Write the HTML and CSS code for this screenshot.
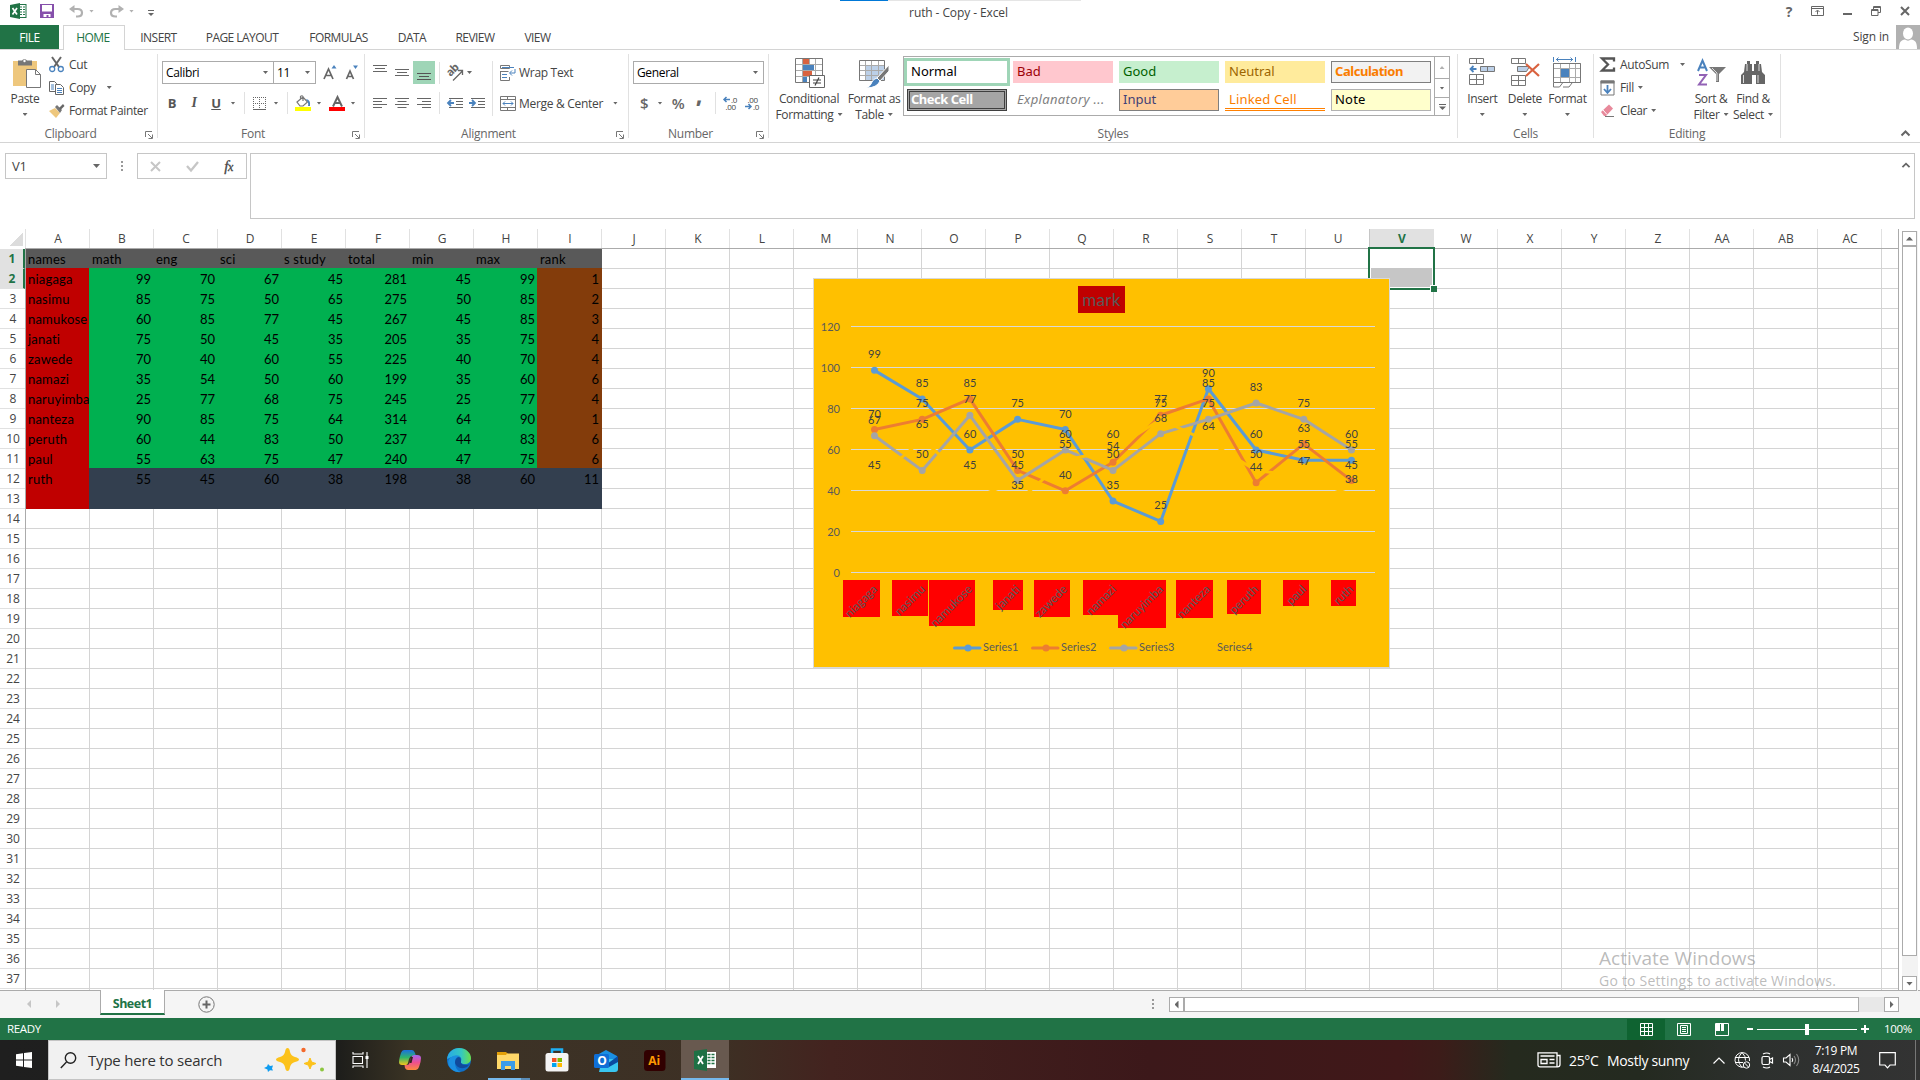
FILE: index.html
```html
<!DOCTYPE html>
<html lang="en">
<head>
<meta charset="utf-8">
<title>ruth - Copy - Excel</title>
<link rel="stylesheet" href="styles.css">
</head>
<body>
<div class="app">
  <header class="titlebar">
    <div class="busy"></div>
    <div class="quick">
      <svg class="q-xl" width="17" height="16" viewBox="0 0 17 16"><rect x="9" y="1.500" width="7" height="13" fill="#fff" stroke="#217346"/><path d="M10 4h5M10 6.500h5M10 9h5M10 11.500h5" stroke="#217346"/><path d="M12.500 2v12" stroke="#fff"/><path d="M0 2L10 0v16L0 14z" fill="#217346"/><path d="M2.500 5l4.500 6.500M7 5l-4.500 6.500" stroke="#fff" stroke-width="1.700"/></svg>
      <svg class="q-save" width="14" height="14" viewBox="0 0 14 14"><path d="M0 0h14v14H0z" fill="#8650ab"/><path d="M2 1h10v6.500H2zM3.500 10h7v3h-2v-2h-2v2h-3z" fill="#fff"/></svg>
      <svg class="q-undo" width="15" height="13" viewBox="0 0 15 13"><path d="M2 4h6.500c6 0 6 7.500 0 7.500H7" fill="none" stroke="#b1b1b1" stroke-width="2.200"/><path d="M0 4l5.500-4v8z" fill="#b1b1b1"/></svg>
      <i class="arr light"></i>
      <svg class="q-redo" width="15" height="13" viewBox="0 0 15 13"><path d="M13 4H6.500c-6 0-6 7.500 0 7.500H8" fill="none" stroke="#b1b1b1" stroke-width="2.200"/><path d="M15 4L9.500 0v8z" fill="#b1b1b1"/></svg>
      <i class="arr light"></i>
      <svg class="q-more" width="6" height="6" viewBox="0 0 6 6"><path d="M0 .5h6" stroke="#666"/><path d="M0 3h6L3 6z" fill="#666"/></svg>
    </div>
    <div class="title">ruth - Copy - Excel</div>
    <div class="winbtns">
      <b>?</b>
      <svg width="13" height="10" viewBox="0 0 13 10" fill="none" stroke="#666"><path d="M.5.5h12v9H.5zM.5 2.500h12M6.500 8.500V4.500M4.500 6l2-2 2 2"/></svg>
      <svg width="9" height="10" viewBox="0 0 9 10"><path d="M0 7h9v2H0z" fill="#666"/></svg>
      <svg width="10" height="10" viewBox="0 0 10 10" fill="none" stroke="#666"><path d="M2.500 3V.5h7v6H7M2.500 1.500h7M.5 3.500h6.500v6H.5zM.5 4.500H7"/></svg>
      <svg width="10" height="10" viewBox="0 0 10 10"><path d="M1 1l8 8M9 1L1 9" stroke="#666" stroke-width="2"/></svg>
    </div>
  </header>

  <nav class="tabs">
    <a class="file">FILE</a><a class="home">HOME</a><a class="t-ins">INSERT</a><a class="t-page">PAGE LAYOUT</a><a class="t-form">FORMULAS</a><a class="t-data">DATA</a><a class="t-rev">REVIEW</a><a class="t-view">VIEW</a>
    <span class="signin">Sign in</span>
    <svg width="24" height="24" viewBox="0 0 24 24"><path d="M0 0h24v24H0z" fill="#b1b1b1"/><ellipse cx="12" cy="8.500" rx="5" ry="6" fill="#fff"/><path d="M3 24c0-7 2-9 6-9.500 2 1.500 4 1.500 6 0 4 .5 6 2.500 6 9.500z" fill="#fff"/></svg>
  </nav>

  <section class="ribbon">
    <div class="group">
      <div class="body clip">
        <div class="big paste">
          <svg width="30" height="30" viewBox="0 0 30 30"><path d="M1 3h24v25H1z" fill="#eec77d"/><path d="M6 2.500h4a3 3 0 0 1 5 0h5v5H6z" fill="#777"/><circle cx="12.500" cy="3" r="1.200" fill="#fff"/><path d="M14.500 11.500h9l5 5v13h-14z" fill="#fff" stroke="#777"/><path d="M23.500 11.500v5h5" fill="none" stroke="#777"/></svg>
          <span>Paste</span><i class="arr"></i>
        </div>
        <div class="stack">
          <div class="item"><svg width="15" height="16" viewBox="0 0 15 16"><path d="M3 0l7 10M12 0L5 10" stroke="#666" stroke-width="2"/><circle cx="3.200" cy="12" r="2.500" fill="none" stroke="#4a82bd" stroke-width="1.300"/><circle cx="11.800" cy="12" r="2.500" fill="none" stroke="#4a82bd" stroke-width="1.300"/></svg><span>Cut</span></div>
          <div class="item"><svg width="15" height="14" viewBox="0 0 15 14" fill="#fff" stroke="#666"><path d="M.5.5h5l2 2v8h-7z"/><path d="M2 4h3M2 6h3M2 8h3" stroke="#4a82bd"/><path d="M6.500 3.500h5l3 3v7h-8z"/><path d="M8 7.500h5M8 9.500h5M8 11.500h5" stroke="#4a82bd"/></svg><span>Copy</span><i class="arr gap10"></i></div>
          <div class="item"><svg width="15" height="14" viewBox="0 0 15 14"><path d="M0 7l6-3 5 5-4 5z" fill="#eec77d"/><path d="M6 3l2-2 5 5-2 3z" fill="#777"/><path d="M10 4l4-4 1.500 2-4 4z" fill="#666"/></svg><span>Format Painter</span></div>
        </div>
      </div>
      <div class="caption"><span>Clipboard</span><svg class="launch" viewBox="0 0 8 8"><path d="M.5 6V.5H7M3 3l4 4M7.500 3.500v4h-4" fill="none" stroke="#777"/></svg></div>
    </div>

    <div class="group">
      <div class="body font-body">
        <div class="font-top">
          <div class="combo c-font"><span>Calibri</span><i class="arr"></i></div><div class="combo c-size"><span>11</span><i class="arr"></i></div>
          <svg class="grow" width="14" height="15" viewBox="0 0 14 15"><path d="M1 14L5.500 4 10 14M3 10.500h5" fill="none" stroke="#666" stroke-width="1.700"/><path d="M8.500 3.500L11 0l2.500 3.500z" fill="#4a82bd"/></svg>
          <svg class="shrink" width="14" height="15" viewBox="0 0 14 15"><path d="M1.500 14L5 6l3.500 8M3 11.500h4" fill="none" stroke="#666" stroke-width="1.700"/><path d="M8 .5h5L10.500 4z" fill="#4a82bd"/></svg>
        </div>
        <div class="font-row">
          <b>B</b><b class="it">I</b><b class="un">U</b><i class="arr"></i><i class="vsep"></i>
          <svg width="13" height="13" viewBox="0 0 13 13" fill="none" stroke="#666"><path d="M.5 0v12M12.500 0v12M6.500 0v12M0 .5h13M0 6.500h13" stroke-dasharray="1 1"/><path d="M0 12.500h13"/></svg><i class="arr"></i><i class="vsep"></i>
          <svg width="16" height="16" viewBox="0 0 16 16"><path d="M0 12h16v4H0z" fill="#ff0"/><path d="M2 7l6-5 4.500 5L8 11H5zM5.500 5V1.500q1.500-1.500 2.500 0V6" fill="none" stroke="#777" stroke-width="1.200"/><path d="M11 4q5 1 4 7h-2q1-3-2-7" fill="#4a82bd"/></svg><i class="arr"></i>
          <svg width="16" height="16" viewBox="0 0 16 16"><path d="M0 12h16v4H0z" fill="red"/><path d="M4 11.500L8.500 2l4.500 9.500M6 8h5" fill="none" stroke="#666" stroke-width="2"/></svg><i class="arr"></i>
        </div>
      </div>
      <div class="caption"><span>Font</span><svg class="launch" viewBox="0 0 8 8"><path d="M.5 6V.5H7M3 3l4 4M7.500 3.500v4h-4" fill="none" stroke="#777"/></svg></div>
    </div>

    <div class="group">
      <div class="body align-body">
        <div class="align-row">
          <svg width="14" height="22" viewBox="0 0 14 22"><path d="M0 3.500h14M2 6.500h10M0 9.500h14" stroke="#666"/></svg>
          <svg width="14" height="22" viewBox="0 0 14 22"><path d="M0 7.500h14M2 10.500h10M0 13.500h14" stroke="#666"/></svg>
          <svg class="on" width="22" height="23" viewBox="0 0 22 23"><path d="M4 12.500h14M6 15.500h10M4 18.500h14" stroke="#555"/></svg>
          <i class="vsep"></i>
          <svg width="16" height="16" viewBox="0 0 16 16"><text x="0" y="0" transform="translate(3.500 12) rotate(-45)" class="ab">ab</text><path d="M6 15.500l9-9M11 5.500h4.500V10" fill="none" stroke="#666" stroke-width="1.300"/></svg>
          <i class="arr near"></i><i class="vsep tall"></i>
          <svg width="16" height="16" viewBox="0 0 16 16" fill="none" stroke="#777"><path d="M.5.5h9v3h-9zM.5 6v9.500h9V12M.5 6.500h8"/><path d="M2 2.500h12M2 9.500h5M2 12.500h5M15 4v4h-5M12 5.500L9.500 8l2.500 2.500" stroke="#4a82bd"/></svg><span class="txt">Wrap Text</span>
        </div>
        <div class="align-row second">
          <svg width="14" height="11" viewBox="0 0 14 11"><path d="M0 .5h14M0 3.500h9M0 6.500h14M0 9.500h9" stroke="#666"/></svg>
          <svg width="14" height="11" viewBox="0 0 14 11"><path d="M0 .5h14M2.500 3.500h9M0 6.500h14M2.500 9.500h9" stroke="#666"/></svg>
          <svg width="14" height="11" viewBox="0 0 14 11"><path d="M0 .5h14M5 3.500h9M0 6.500h14M5 9.500h9" stroke="#666"/></svg>
          <i class="vsep"></i>
          <svg width="16" height="11" viewBox="0 0 16 11"><path d="M2 .5h14M9 3.500h7M9 6.500h7M2 9.500h14" stroke="#666"/><path d="M1 5h6M4 2L1 5l3 3" fill="none" stroke="#4a82bd" stroke-width="1.800"/></svg>
          <svg width="16" height="11" viewBox="0 0 16 11"><path d="M2 .5h14M9 3.500h7M9 6.500h7M2 9.500h14" stroke="#666"/><path d="M0 5h6M3 2l3 3-3 3" fill="none" stroke="#4a82bd" stroke-width="1.800"/></svg>
          <i></i>
          <svg width="16" height="15" viewBox="0 0 16 15" fill="none" stroke="#777"><path d="M.5.5h15v14H.5zM.5 3.500h15M.5 11.500h15M7.500 0v3M7.500 12v3"/><path d="M3 7.500h10M5 5.500l-2 2 2 2M11 5.500l2 2-2 2" stroke="#4a82bd"/></svg><span class="txt">Merge &amp; Center <i class="arr merge"></i></span>
        </div>
      </div>
      <div class="caption"><span>Alignment</span><svg class="launch" viewBox="0 0 8 8"><path d="M.5 6V.5H7M3 3l4 4M7.500 3.500v4h-4" fill="none" stroke="#777"/></svg></div>
    </div>

    <div class="group">
      <div class="body num-body">
        <div class="combo c-num"><span>General</span><i class="arr"></i></div>
        <div class="num-row">
          <b class="cur">$</b><i class="arr"></i><b class="pct">%</b><b class="comma">,</b><i class="vsep"></i>
          <svg width="15" height="15" viewBox="0 0 15 15"><path d="M1 3.500h6M3.500 1L1 3.500 3.500 6" fill="none" stroke="#4a82bd" stroke-width="1.500"/><text x="8" y="6.500" class="dec">.0</text><text x="2.500" y="14" class="dec">.00</text></svg>
          <svg width="15" height="15" viewBox="0 0 15 15"><path d="M0 10.500h6M3.500 8L6 10.500 3.500 13" fill="none" stroke="#4a82bd" stroke-width="1.500"/><text x="2.500" y="6.500" class="dec">.00</text><text x="8" y="14" class="dec">.0</text></svg>
        </div>
      </div>
      <div class="caption"><span>Number</span><svg class="launch" viewBox="0 0 8 8"><path d="M.5 6V.5H7M3 3l4 4M7.500 3.500v4h-4" fill="none" stroke="#777"/></svg></div>
    </div>

    <div class="group">
      <div class="body style-body">
        <div class="big cond">
          <svg width="30" height="30" viewBox="0 0 30 30"><path d="M.5.5h27v24H.5z" fill="#fff"/><path d="M8 1h6v5H8zM8 13h9v5H8z" fill="#d9623f"/><path d="M8 7h11v5H8zM8 19h4v5H8z" fill="#4a82bd"/><path d="M.5 6.500h27M.5 12.500h27M.5 18.500h27M7.500.5v24M20.500.5v24M14.500.5v6" stroke="#aaa"/><path d="M.5.5h27v24H.5z" fill="none" stroke="#777"/><path d="M14.500 17.500h15v12h-15z" fill="#fff" stroke="#666"/><path d="M18 22h8M18 25h8M24 19.500l-4 8" stroke="#444" stroke-width="1.200"/></svg>
          <span>Conditional</span><span>Formatting<i class="arr in"></i></span>
        </div>
        <div class="big tbl">
          <svg width="30" height="30" viewBox="0 0 30 30"><path d="M.5 2.500h25v20H.5z" fill="#fff"/><path d="M7 7h18v15H7z" fill="#bcd0e8"/><path d="M.5 7.500h25M.5 12.500h25M.5 17.500h25M6.500 2.500v20M12.500 2.500v20M19.500 2.500v20" stroke="#aaa"/><path d="M.5 2.500h25v20H.5z" fill="none" stroke="#777"/><path d="M30 7v6l-9 10-3-3z" fill="#777" stroke="#fff"/><path d="M18 20l3 3q-3 7-14 7 5-2 6-6 1-3 5-4" fill="#4a82bd" stroke="#fff"/></svg>
          <span>Format as</span><span>Table<i class="arr in"></i></span>
        </div>
        <div class="gallery">
          <div class="swatches">
            <div class="sw normal">Normal</div><div class="sw bad">Bad</div><div class="sw good">Good</div><div class="sw neutral">Neutral</div><div class="sw calc">Calculation</div>
            <div class="sw check">Check Cell</div><div class="sw expl">Explanatory ...</div><div class="sw input">Input</div><div class="sw linked">Linked Cell</div><div class="sw note">Note</div>
          </div>
          <div class="gscroll"><div><i class="arr up light"></i></div><div><i class="arr"></i></div><div><svg width="7" height="6" viewBox="0 0 7 6"><path d="M0 .5h7" stroke="#666"/><path d="M0 2.500h7L3.500 6z" fill="#666"/></svg></div></div>
        </div>
      </div>
      <div class="caption"><span>Styles</span></div>
    </div>

    <div class="group">
      <div class="body cells-body">
        <div class="big"><svg width="28" height="30" viewBox="0 0 28 30" fill="none" stroke="#777"><path d="M1.500.5h14v5h-14zM8.500.5v5M1.500 16.500h14v10h-14zM8.500 16.500v10M1.500 21.500h14"/><path d="M12.500 8.500h14v5h-14z" fill="#bcd0e8"/><path d="M19.500 8.500v5"/><path d="M2.500 11h6M5.500 8l-3 3 3 3" stroke="#4a82bd" stroke-width="1.800"/></svg><span>Insert</span><i class="arr"></i></div>
        <div class="big"><svg width="28" height="30" viewBox="0 0 28 30" fill="none" stroke="#777"><path d="M.5.5h14v5H.5zM7.500.5v5M.5 17.500h14v10H.5zM7.500 17.500v10M.5 22.500h14"/><path d="M6.500 8.500h12l-3 5h-9z" fill="#bcd0e8"/><path d="M15 6l13 12M28 6L15 18" stroke="#d9623f" stroke-width="2.200"/></svg><span>Delete</span><i class="arr"></i></div>
        <div class="big"><svg width="28" height="32" viewBox="0 0 28 32" fill="none" stroke="#777"><path d="M.5 7.500h27v19H.5zM7.500 7v20M16.500 7v20M22.500 7v20M.5 12.500h27M.5 21.500h27" stroke="#aaa"/><path d="M.5 7.500h27v19H.5zM.5 27v4h6l3-4M10 31h6l3-4"/><path d="M8 13h8v8H8z" fill="#4a82bd" stroke="none"/><path d="M.5 1v5M22.500 1v5M3 3.500h17M5.500 1.500l-2 2 2 2M17.500 1.500l2 2-2 2" stroke="#4a82bd"/></svg><span>Format</span><i class="arr"></i></div>
      </div>
      <div class="caption"><span>Cells</span></div>
    </div>

    <div class="group">
      <div class="body edit-body">
        <div class="stack">
          <div class="item"><svg width="15" height="16" viewBox="0 0 15 16"><path d="M14 4.500V1.500H2l6 6-6 6h12v-3" fill="none" stroke="#555" stroke-width="2.300"/></svg><span>AutoSum</span><i class="arr gap10"></i></div>
          <div class="item"><svg width="15" height="16" viewBox="0 0 15 16"><path d="M1 1h13v14H1z" fill="#fff" stroke="#777"/><path d="M.5.5h14v3H.5z" fill="#777"/><path d="M7.500 5v7M4 9l3.500 4L11 9" fill="none" stroke="#4a82bd" stroke-width="1.800"/></svg><span>Fill</span><i class="arr in"></i></div>
          <div class="item"><svg width="15" height="14" viewBox="0 0 15 14"><path d="M1 8l8-7.500 4 4L6 12H4z" fill="#e8899b"/><path d="M3 6l4 4.500" stroke="#fff"/><path d="M5 12.500h9" stroke="#777"/></svg><span>Clear</span><i class="arr in"></i></div>
        </div>
        <div class="big sort"><svg width="29" height="28" viewBox="0 0 29 28"><path d="M1 12L5.500 1.500 10 12M3 8.500h5" fill="none" stroke="#4a82bd" stroke-width="2"/><path d="M2 16h7L2 25.500h8" fill="none" stroke="#9262b5" stroke-width="2"/><path d="M12 8h17l-7 7v8h-3v-8z" fill="#777"/><path d="M15 9l5 5v8" stroke="#ddd" fill="none"/></svg><span>Sort &amp;</span><span>Filter<i class="arr in"></i></span></div>
        <div class="big find"><svg width="26" height="26" viewBox="0 0 26 26" fill="#666"><path d="M7 1h3v3h2v7h2V4h2V1h3v3h2l1 8 3 3v9h-9v-9h-4v9H1v-9l3-3 1-8h2z"/><path d="M3.500 15v8M18 15v8M7 4v7M19 4v7" stroke="#ddd"/></svg><span>Find &amp;</span><span>Select<i class="arr in"></i></span></div>
      </div>
      <div class="caption"><span>Editing</span></div>
    </div>
    <div class="collapse"><svg width="9" height="6" viewBox="0 0 9 6"><path d="M.5 5.500l4-4 4 4" fill="none" stroke="#666" stroke-width="2"/></svg></div>
  </section>

  <section class="fbar">
    <div class="namebox"><span>V1</span><i class="arr wide"></i></div>
    <div class="dots"><i></i><i></i><i></i></div>
    <div class="fbtns">
      <svg width="11" height="11" viewBox="0 0 11 11"><path d="M1 1l9 9M10 1l-9 9" stroke="#c6c6c6" stroke-width="2"/></svg>
      <svg width="13" height="11" viewBox="0 0 13 11"><path d="M1 5l4 4.500L12 1" fill="none" stroke="#c6c6c6" stroke-width="2.300"/></svg>
      <span class="fx">f<small>x</small></span>
    </div>
    <div class="finput"><svg width="8" height="6" viewBox="0 0 9 6"><path d="M.5 5.500l4-4 4 4" fill="none" stroke="#666" stroke-width="2"/></svg></div>
  </section>

  <main class="sheet">
    <div class="sheet-main">
      <div class="colheads" id="colheads"><div class="corner"></div></div>
      <div class="rows">
        <div class="rowheads" id="rowheads"></div>
        <div class="grid">
          <div class="data" id="data"></div>
          <div class="selection"></div>
          <svg class="chart" id="chart" width="577" height="390" viewBox="813 278 577 390"></svg>
        </div>
      </div>
    </div>
    <div class="vscroll"><div class="sbtn"><i class="arr up"></i></div><div class="vthumb"></div><div class="sbtn"><i class="arr"></i></div></div>
    <div class="watermark"><p>Activate Windows</p><p class="small">Go to Settings to activate Windows.</p></div>
  </main>

  <section class="sheettabs">
    <i class="tri left"></i><i class="tri right"></i>
    <div class="stab">Sheet1</div>
    <svg class="plus" width="17" height="17" viewBox="0 0 17 17"><circle cx="8.500" cy="8.500" r="7.700" fill="none" stroke="#777"/><path d="M8.500 4.500v8M4.500 8.500h8" stroke="#666" stroke-width="2"/></svg>
    <div class="dots hd"><i></i><i></i><i></i></div>
    <div class="hscroll"><div class="hbtn"><i class="tri left dark"></i></div><div class="hthumb"></div><div class="htrack"></div><div class="hbtn"><i class="tri right dark"></i></div></div>
  </section>

  <section class="status">
    <span class="ready">READY</span>
    <div class="view act"><svg width="13" height="13" viewBox="0 0 13 13"><path d="M.5.5h12v12H.5zM.5 4.500h12M.5 8.500h12M4.500.5v12M8.500.5v12" fill="none" stroke="#fff"/></svg></div>
    <div class="view"><svg width="14" height="13" viewBox="0 0 14 13"><path d="M.5.5h13v12H.5zM3.500 2.500h7v8h-7zM5 4.500h4M5 6.500h4M5 8.500h4" fill="none" stroke="#fff"/></svg></div>
    <div class="view"><svg width="14" height="13" viewBox="0 0 14 13"><path d="M.5.5h13v12H.5z" fill="none" stroke="#fff"/><path d="M1 1h4v7H1zM6 1h3v7H6z" fill="#fff"/></svg></div>
    <div class="zoom"><i class="minus"></i><div class="track"><i></i></div><i class="pl"></i></div>
    <span class="pctv">100%</span>
  </section>

  <footer class="taskbar">
    <div class="start"><svg width="16" height="16" viewBox="0 0 16 16" fill="#fff"><path d="M0 2.300L7 1.200V7.500H0zM8 1l8-1v7.500H8zM0 8.500h7v6.300L0 13.800zM8 8.500h8V16l-8-1z"/></svg></div>
    <div class="search">
      <svg width="17" height="17" viewBox="0 0 17 17" fill="none" stroke="#222" stroke-width="1.400"><circle cx="10.500" cy="6" r="5.200"/><path d="M6.500 10L.8 16"/></svg>
      <span>Type here to search</span>
      <svg class="spark" width="60" height="26" viewBox="0 0 60 26"><path d="M23.500 1q2 0 2.500 4 1 4 5 5 4 1 4 2.500T31 15q-4 1-5 5-.5 4-2.500 4T21 20q-1-4-5-5-4-1-4-2.500T16 10q4-1 5-5 .500-4 2.500-4" fill="#fcc21b"/><path d="M46 11l1.600 4 4.400 1.500-4.400 1.700L46 22l-1.600-3.800L40 16.500l4.400-1.500z" fill="#fcc21b" stroke="#fcc21b"/><path d="M4 17l2 2 3-.5-1 3 1 2-3-.3L4 25l-.6-2.500L0 21l3-1.500z" fill="#0f9cf0"/><circle cx="39.500" cy="3" r="2.200" fill="#f4692c"/><circle cx="58" cy="22.500" r="2" fill="#8cc63f"/></svg>
    </div>
    <div class="tk"><svg width="17" height="16" viewBox="0 0 17 16" fill="none" stroke="#fff" stroke-width="1.100"><path d="M1 4.500h9.500v7H1zM1 0v2h10V0M1 16v-2h10v2M15 0v16"/><path d="M13.500 4h3v3h-3z" fill="#fff" stroke="none"/></svg></div>
    <div class="tk"><svg width="22" height="22" viewBox="0 0 22 22"><defs><linearGradient id="c1" x2="0" y2="1"><stop offset="0" stop-color="#1a6fe0"/><stop offset=".5" stop-color="#30b56a"/><stop offset="1" stop-color="#f4c51c"/></linearGradient><linearGradient id="c2" x2="0" y2="1"><stop offset="0" stop-color="#a464f0"/><stop offset=".5" stop-color="#ee4f8f"/><stop offset="1" stop-color="#fb8a3c"/></linearGradient></defs><path d="M5 1h8q2 0 3 3l1 3h-4q-2 0-3 3l-1 4q-.6 2-2 2H3q-3 0-3-3 0-3 2-9 1-3 3-3" fill="url(#c1)"/><path d="M17 21H9q-2 0-3-2l-.5-3H8q2 0 2.500-2l1.500-5q1-3 3-3h3q4 0 4 3 0 4-2 9-1 3-3 3" fill="url(#c2)"/><path d="M10.500 14l1.500-6h2l-1.500 6z" fill="#33251d"/></svg></div>
    <div class="tk"><svg width="24" height="24" viewBox="0 0 24 24"><defs><linearGradient id="e1"><stop offset="0" stop-color="#27a8e8"/><stop offset=".6" stop-color="#35c8c0"/><stop offset="1" stop-color="#6be04a"/></linearGradient></defs><circle cx="12" cy="12" r="12" fill="#0f6fc8"/><path d="M0 11C1 4 6 0 12 0c7 0 12 5 12 10 0 4-3 6-6 6-4 0-5-2-4-3 1-2 0-5-4-5-5 0-9 3-10 3" fill="url(#e1)"/><path d="M8 14q0-5 5-6-6-2-10 2-3 3-1 8 4 7 12 6-6-2-6-10" fill="#1b8fe0"/><path d="M14 13q-1 4 5 4 2 0 4-1-2 3-6 4-7 1-9-5 0-5 4-6 2 1 2 4" fill="#114a9b"/></svg></div>
    <div class="tk under split"><svg width="22" height="19" viewBox="0 0 22 19"><path d="M0 1h9l2 2h10v5H0z" fill="#e3a008"/><path d="M0 4h9l1-1.500h12V18H0z" fill="#ffd869"/><path d="M4 10h14v9h-4v-4H8v4H4z" fill="#3c9ce8"/></svg></div>
    <div class="tk"><svg width="24" height="24" viewBox="0 0 24 24"><path d="M7 8V1.500h10V8" fill="none" stroke="#1fb1f5" stroke-width="2.500"/><rect x=".5" y="5" width="23" height="18.500" rx="2.500" fill="#f4f4f4"/><path d="M7 10h4.500v4H7z" fill="#f25022"/><path d="M12.500 10H17v4h-4.500z" fill="#7fba00"/><path d="M7 15h4.500v4H7z" fill="#00a4ef"/><path d="M12.500 15H17v4h-4.500z" fill="#ffb900"/></svg></div>
    <div class="tk"><svg width="24" height="23" viewBox="0 0 24 23"><path d="M3 6l9-5 11 6v6H3z" fill="#1a8fe3"/><path d="M8 10h16v10q0 3-3 3H5z" fill="#39c5f0"/><path d="M13 15l11-8v6l-9 5z" fill="#0a4aa0"/><rect y="5" width="15" height="14" rx="1.500" fill="#0f6fd6"/><text x="3.200" y="16" class="logo">O</text></svg></div>
    <div class="tk"><svg width="22" height="21" viewBox="0 0 22 21"><rect width="21.500" height="21" rx="3.500" fill="#310000"/><text x="4.300" y="15" class="logo ai">Ai</text></svg></div>
    <div class="tk active under"><svg width="23" height="22" viewBox="0 0 23 22"><path d="M12 3h10v16H12z" fill="#fff"/><path d="M13.500 5.500h7M13.500 8.500h7M13.500 11.500h7M13.500 14.500h7" stroke="#217346" stroke-width="1.500"/><path d="M17 4v14" stroke="#fff"/><path d="M0 2l13-2v22L0 20z" fill="#1e7145"/><path d="M4 7l5 8M9 7l-5 8" stroke="#fff" stroke-width="1.800"/></svg></div>
    <div class="tray">
      <svg class="news" width="24" height="16" viewBox="0 0 24 16" fill="none" stroke="#fff" stroke-width="1.300"><path d="M1 .8h19v14H3q-2 0-2-2zM20 3.500h3v9q0 2.300-2.500 2.300M3.500 4h14M12.500 7.500h5M12.500 11h5M4 7.500h6v4H4z"/></svg>
      <span class="wx">25°C</span><span class="wx2">Mostly sunny</span>
      <svg class="more" width="12" height="7" viewBox="0 0 12 7"><path d="M.5 6.500L6 1l5.500 5.500" fill="none" stroke="#fff" stroke-width="1.200"/></svg>
      <svg class="globe" width="17" height="17" viewBox="0 0 17 17" fill="none" stroke="#fff"><path d="M10 15A7.300 7.300 0 1 1 15.500 9M8 .5q-7 7 0 15M8 .5q4 4 3.500 8M1 5.500h14M1 10.500h8"/><circle cx="12.500" cy="13" r="3.200"/><path d="M10.500 11l4 4"/></svg>
      <svg class="cam" width="12" height="17" viewBox="0 0 12 17" fill="none" stroke="#fff" stroke-width="1.200"><rect x="1" y="4.500" width="7.500" height="8" rx="1.500"/><path d="M8.500 7.500l3-1.500v5l-3-1.500M2 2q4-2 7 0M2 15q4 2 7 0"/></svg>
      <svg class="vol" width="17" height="14" viewBox="0 0 17 14" fill="none" stroke="#fff" stroke-width="1.100"><path d="M.5 5h2.500l4-3.500v11L3 9H.5zM9 5q1.500 2 0 4"/><path d="M11 3q3 4 0 8M13.500 1q4.500 6 0 12" stroke="#888"/></svg>
      <div class="clock"><span>7:19 PM</span><span>8/4/2025</span></div>
      <svg class="notif" width="17" height="17" viewBox="0 0 17 17"><path d="M.7.700h15.600v12.300H11l-2.500 2.800L6 13H.7z" fill="none" stroke="#fff" stroke-width="1.200"/></svg>
      <i class="peek"></i>
    </div>
  </footer>
</div>
<script src="script.js"></script>
</body>
</html>
```
FILE: styles.css
```css
* { box-sizing: border-box; }
body { margin: 0; background: #fff; font: 12px "Open Sans", "Noto Sans", sans-serif; color: #444; letter-spacing: -0.35px; }
p { margin: 0; }
svg { display: block; flex: none; overflow: visible; }
.app { width: 1920px; height: 1080px; display: flex; flex-direction: column; overflow: hidden; }
.arr { display: inline-block; flex: none; width: 5px; height: 3px; background: #666; clip-path: polygon(0 0, 100% 0, 50% 100%); }
.arr.light { background: #b1b1b1; }
.arr.wide { width: 7px; height: 4px; }
.arr.up { clip-path: polygon(50% 0, 100% 100%, 0 100%); }
.arr.in { margin-left: 4px; vertical-align: 3px; }
.arr.gap10 { margin-left: 11px; }
.arr.merge { margin-left: 7px; vertical-align: 3px; }

/* title bar */
.titlebar { height: 25px; display: grid; grid-template-columns: 840px 237px 1fr; position: relative; }
.busy { position: absolute; left: 840px; top: 0; width: 241px; height: 1px; background: linear-gradient(90deg, #0078d7 48px, #e5e5e5 48px); }
.quick { display: flex; align-items: center; height: 22px; padding-left: 10px; }
.q-save { margin-left: 13px; }
.q-undo { margin: 0 5px 0 15px; }
.q-redo { margin: 0 5px 0 15px; }
.q-more { margin: 4px 0 0 14px; }
.title { text-align: center; line-height: 26px; letter-spacing: -0.1px; }
.winbtns { display: flex; align-items: center; justify-content: flex-end; height: 22px; padding-right: 10px; gap: 19px; color: #666; }
.winbtns b { font-size: 14px; margin-right: 0; }

/* ribbon tabs */
.tabs { height: 25px; display: flex; line-height: 25px; position: relative; border-bottom: 1px solid #d4d4d4; }
.tabs a { text-align: center; letter-spacing: -0.55px; }
.tabs .file { width: 59px; background: #217346; color: #fff; }
.tabs .home { width: 62px; margin-left: 4px; height: 25px; border: 1px solid #d4d4d4; border-bottom: 0; background: #fff; color: #217346; line-height: 24px; padding-right: 2px; }
.t-ins { width: 67px; } .t-page { width: 100px; } .t-form { width: 93px; } .t-data { width: 54px; } .t-rev { width: 72px; } .t-view { width: 53px; }
.signin { margin-left: auto; margin-right: 7px; line-height: 24px; letter-spacing: -0.15px; }

/* ribbon */
.ribbon { height: 93px; display: grid; grid-template-columns: 158px 207px 264px 140px 689px 136px 187px 1fr; padding-top: 4px; border-bottom: 1px solid #d4d4d4; }
.group { height: 84px; border-right: 1px solid #e1e1e1; }
.body { height: 72px; display: flex; }
.caption { display: flex; justify-content: center; position: relative; height: 12px; line-height: 15px; color: #666; }
.caption span { margin-right: 16px; margin-top: 1px; line-height: 14px; letter-spacing: -0.25px; }
.caption span:only-child { margin-right: 0; }
.launch { position: absolute; right: 4px; top: 5px; width: 8px; height: 8px; }
.big { display: flex; flex-direction: column; align-items: center; padding-top: 4px; line-height: 16px; white-space: nowrap; }
.big svg + span { margin-top: 3px; }
.big > .arr { margin-top: 6px; }
.big svg { height: 30px; }
.paste { width: 49px; padding-left: 1px; }
.paste svg { margin-left: 4px; }
.stack { display: flex; flex-direction: column; margin-top: -1px; }
.item { display: flex; align-items: center; height: 23px; }
.item span { margin-left: 5px; }
.clip .stack svg { width: 15px; }
.combo { display: flex; align-items: center; justify-content: space-between; height: 23px; border: 1px solid #ababab; padding: 0 5px 0 3px; color: #000; }
.font-body, .align-body, .num-body { flex-direction: column; padding: 7px 4px 0; }
.font-top { display: flex; align-items: center; }
.c-font { width: 112px; } .c-size { width: 43px; margin-left: -1px; }
.grow { margin-left: 7px; } .shrink { margin-left: 8px; }
.font-row { display: grid; grid-template-columns: 22px 22px 22px 12px 10px 20px 14px 8px 24px 8px 28px 4px; justify-items: center; align-items: center; height: 22px; margin: 8px 0 0 -1px; }
.font-row b { font: bold 13px "Open Sans", sans-serif; color: #555; }
.font-row b.it { font: italic bold 14px "Liberation Serif", serif; }
.font-row b.un { text-decoration: underline; }
.vsep { width: 1px; height: 22px; background: #e1e1e1; }
.vsep.tall { height: 55px; align-self: start; }
.align-row { display: grid; grid-template-columns: 22px 22px 22px 9px 22px 22px 8px 24px 1fr; grid-template-rows: 23px; justify-items: center; align-items: center; height: 23px; }
.align-row.second { margin-top: 8px; height: 22px; grid-template-rows: 22px; }
.on { background: #9fd5b7; }
.near { justify-self: start; margin-left: 1px; }
.txt { justify-self: start; margin-left: -1px; white-space: nowrap; letter-spacing: -0.3px; }
.ab { font: bold 11px "Open Sans", sans-serif; fill: #666; letter-spacing: -0.5px; }
.dec { font: 8px "Open Sans", sans-serif; fill: #444; letter-spacing: -0.3px; }
.c-num { width: 131px; }
.num-row { display: grid; grid-template-columns: 22px 10px 26px 16px 16px 15px 7px 15px; justify-items: center; align-items: center; height: 22px; margin-top: 8px; color: #666; }
.num-row svg:last-child { grid-column: 8; }
.cur, .pct, .comma { font: 600 15px "Open Sans", sans-serif; }
.comma { font-weight: 800; font-size: 20px; margin-top: -16px; }
.cond { width: 79px; padding-left: 1px; } .tbl { width: 51px; padding-left: 1px; }
.cond svg { margin-left: 2px; }
.gallery { margin: 2px 0 0 4px; width: 547px; height: 60px; border: 1px solid #ababab; display: flex; }
.swatches { flex: 1; display: grid; grid-template-columns: repeat(5, 100px); gap: 6px; padding: 4px 0 0 3px; grid-auto-rows: 22px; }
.sw { padding-left: 4px; line-height: 21px; font-size: 13px; letter-spacing: 0; white-space: nowrap; font-family: "Noto Sans", sans-serif; }
.normal { color: #000; outline: 3px solid #9fd5b7; background: #fff; }
.bad { background: #ffc7ce; color: #9c0006; } .good { background: #c6efce; color: #006100; } .neutral { background: #ffeb9c; color: #9c6500; }
.calc { background: #f2f2f2; border: 1px solid #7f7f7f; color: #fa7d00; font-weight: bold; padding-left: 3px; line-height: 19px; letter-spacing: -0.45px; }
.check { background: #a5a5a5; border: 3px double #3f3f3f; color: #fff; font-weight: bold; padding-left: 1px; line-height: 15px; letter-spacing: -0.5px; }
.expl { color: #7f7f7f; font-style: italic; letter-spacing: 0.35px; }
.input { background: #ffcc99; border: 1px solid #7f7f7f; color: #3f3f76; padding-left: 3px; line-height: 19px; }
.linked { color: #fa7d00; border-bottom: 3px double #ff8001; line-height: 20px; letter-spacing: 0.15px; }
.note { background: #ffffcc; border: 1px solid #b2b2b2; color: #000; padding-left: 3px; line-height: 19px; letter-spacing: 0.2px; }
.gscroll { width: 15px; flex: none; border-left: 1px solid #ababab; display: grid; grid-template-rows: 21px 19px 18px; }
.gscroll div { display: flex; align-items: center; justify-content: center; }
.gscroll div + div { border-top: 1px solid #ababab; }
.cells-body { padding-left: 3px; }
.cells-body .big { width: 42.600px; }
.cells-body .big:nth-child(3) svg { margin-top: -2px; height: 32px; }
.edit-body { padding-left: 6px; }
.edit-body .stack { width: 92px; }
.sort { width: 38px; } .find { width: 46px; }
.collapse { display: flex; align-items: flex-end; justify-content: flex-end; padding: 0 10px 6px 0; height: 88px; }

/* formula bar */
.fbar { height: 86px; display: flex; padding: 10px 5px 0; align-items: flex-start; }
.namebox { width: 102px; height: 26px; border: 1px solid #c6c6c6; display: flex; align-items: center; justify-content: space-between; padding: 0 6px; font-size: 13px; }
.dots { width: 3px; display: flex; flex-direction: column; gap: 2px; margin: 8px 0 0 14px; }
.dots i { width: 2px; height: 2px; background: #999; }
.fbtns { width: 110px; height: 26px; margin-left: 13px; border: 1px solid #c6c6c6; display: flex; align-items: center; justify-content: space-between; padding: 0 13px 0 12px; }
.fx { font: italic 15px "Liberation Serif", serif; color: #444; -webkit-text-stroke: 0.3px #444; }
.fx small { font-size: 12px; }
.finput { flex: 1; margin-left: 3px; height: 66px; border: 1px solid #c6c6c6; display: flex; justify-content: flex-end; padding: 8px 4px; }

/* worksheet */
.sheet { height: 762px; display: flex; position: relative; background: #fff; border-bottom: 1px solid #ababab; }
.sheet-main { width: 1899px; border-right: 1px solid #ababab; overflow: hidden; }
.colheads { height: 19px; display: flex; }
.corner { width: 25px; height: 19px; background: linear-gradient(135deg, transparent 50%, #dcdcdc 50%) 9px 3px / 14px 14px no-repeat; flex: none; }
.colheads .h { width: 64px; flex: none; text-align: center; border-left: 1px solid #e1e1e1; line-height: 19px; font-size: 12px; letter-spacing: 0; padding-left: 1px; }
.colheads .h.cur { background: #e1e1e1; font-weight: bold; color: #217346; border-left-color: #c6c6c6; }
.rows { display: flex; height: 742px; }
.rowheads { width: 25px; flex: none; padding-top: 1px; }
.rowheads .r { height: 20px; line-height: 20px; text-align: center; border-bottom: 1px solid #e1e1e1; font-size: 12px; letter-spacing: -0.1px; padding-left: 1px; }
.rowheads .r.cur { background: #e1e1e1; font-weight: bold; color: #217346; border-right: 2px solid #217346; }
.grid { flex: 1; position: relative; background: linear-gradient(90deg, #d4d4d4 1px, transparent 1px) 0 0 / 64px 100%, linear-gradient(#d4d4d4 1px, transparent 1px) 0 0 / 100% 20px; }
.grid::after { content: ""; position: absolute; inset: 0; border: solid #ababab; border-width: 1px 0 0 1px; }
.data { display: grid; grid-template-columns: repeat(9, 64px); grid-auto-rows: 20px; width: 577px; font: 13px Lato, sans-serif; letter-spacing: 0; color: #000; }
.c { padding: 1px 2px 0 3px; line-height: 20px; text-align: right; white-space: nowrap; overflow: hidden; }
.c.left { text-align: left; letter-spacing: 0.2px; }
.c.head { background: #595959; } .c.name { background: #c00000; } .c.mark { background: #00b050; } .c.rank { background: #833c0b; } .c.navy { background: #333f4f; }
.c.last { width: 65px; padding-right: 3px; }
.grid .c:nth-last-child(-n+9) { height: 21px; }
.selection { position: absolute; left: 1343px; top: -1px; width: 67px; height: 43px; border: 2px solid #217346; background: #c6c6c6; box-shadow: inset 0 0 0 1px #fff, inset 0 19px #fff; z-index: 2; }
.selection::after { content: ""; position: absolute; right: -4px; bottom: -4px; width: 6px; height: 6px; background: #217346; border: solid #fff; border-width: 1px 0 0 1px; }
.chart { position: absolute; left: 788px; top: 30px; z-index: 3; font: 11px Lato, sans-serif; fill: #404040; letter-spacing: 0; }
.chart .axis { fill: #595959; }
.chart .cat { font-size: 12px; }
.chart .ttl { font-size: 17px; fill: #595959; letter-spacing: 0.3px; }
.vscroll { width: 16px; margin: 2px 0 0 3px; height: 760px; background: #f3f3f3; display: flex; flex-direction: column; justify-content: space-between; }
.sbtn { height: 15px; width: 15px; border: 1px solid #ababab; background: #fff; display: flex; align-items: center; justify-content: center; }
.sbtn .arr { width: 7px; height: 4px; }
.vthumb { width: 15px; height: 710px; border: 1px solid #ababab; background: #fff; margin: 0 0 auto; }
.watermark { position: absolute; left: 1599px; top: 716px; color: rgba(130,130,130,.55); font-size: 19px; letter-spacing: 0.05px; line-height: 26px; z-index: 4; }
.watermark .small { font-size: 14px; line-height: 20px; letter-spacing: 0.22px; }

/* sheet tabs */
.sheettabs { height: 27px; background: #f5f5f5; display: flex; align-items: flex-start; }
.tri { width: 4px; height: 8px; background: #c6c6c6; flex: none; }
.tri.left { clip-path: polygon(100% 0, 100% 100%, 0 50%); }
.tri.right { clip-path: polygon(0 0, 100% 50%, 0 100%); }
.tri.dark { background: #666; }
.sheettabs > .tri.left { margin: 9px 0 0 27px; }
.sheettabs > .tri.right { margin: 9px 0 0 25px; }
.stab { width: 65px; height: 25px; margin: -1px 0 0 40px; background: #fff; border: 1px solid #ababab; border-width: 0 1px; border-bottom: 2px solid #217346; text-align: center; color: #217346; font-weight: bold; line-height: 27px; font-size: 12.500px; letter-spacing: -0.5px; position: relative; }
.plus { margin: 5px 0 0 33px; }
.hd { margin: 8px 0 0 937px; }
.hscroll { display: flex; width: 730px; height: 15px; margin: 6px 0 0 14px; background: #e8e8e8; }
.hbtn { width: 15px; border: 1px solid #ababab; background: #fff; display: flex; align-items: center; justify-content: center; }
.hthumb { width: 675px; border: 1px solid #ababab; background: #fff; }
.htrack { flex: 1; }

/* status bar */
.status { height: 22px; background: #217346; color: #fff; display: flex; align-items: center; line-height: 22px; font-size: 11.500px; }
.ready { margin-left: 7px; width: 1620px; }
.view { width: 38px; height: 21px; display: flex; align-items: center; justify-content: center; margin-top: 1px; }
.view.act { background: #0f6331; }
.zoom { display: flex; align-items: center; margin-left: 6px; }
.minus { width: 6px; height: 2px; background: #fff; }
.track { width: 100px; height: 1px; background: #fff; margin: 0 4px; display: flex; justify-content: center; align-items: center; }
.track i { width: 4px; height: 11px; background: #fff; flex: none; }
.pl { width: 8px; height: 8px; background: linear-gradient(#fff, #fff) 0 3px / 8px 2px no-repeat, linear-gradient(#fff, #fff) 3px 0 / 2px 8px no-repeat; }
.pctv { margin-left: 15px; }

/* taskbar */
.taskbar { height: 40px; display: flex; color: #fff; background: linear-gradient(90deg, #1f1f1f 0, #1e1e1b 340px, #3a3324 410px, #3c3226 500px, #3d3024 720px, #43231f 830px, #3c181a 1150px, #401819 1400px, #3c1c19 1440px, #252a1e 1510px, #242a20 1640px, #2d302e 1760px, #333 1920px); }
.start { width: 48px; display: flex; align-items: center; justify-content: center; }
.search { width: 288px; background: #f1f1f1; border: 1px solid #c4c4c4; display: flex; align-items: center; padding-left: 11px; color: #333; font-size: 15px; letter-spacing: -0.5px; }
.search span { margin-left: 11px; width: 132px; white-space: nowrap; }
.spark { margin-left: 44px; }
.search { letter-spacing: -0.5px; }
.tk { width: 49px; display: flex; align-items: center; justify-content: center; position: relative; }
.under { border-bottom: 2px solid #76b9ed; padding-top: 2px; }
.split { border-image: linear-gradient(90deg, transparent 6px, #76b9ed 6px, #76b9ed 37px, #5a8db8 37px, #5a8db8 46px, transparent 46px) 1; border-style: solid; border-width: 0 0 2px; }
.active { background: #68594f; width: 48px; margin-left: 2px; }
.logo { font: bold 12px "Open Sans", sans-serif; fill: #fff; }
.logo.ai { fill: #ff9a00; letter-spacing: 0; }
.tray { margin-left: auto; display: flex; align-items: center; }
.wx { margin-left: 8px; width: 38px; font-size: 14px; }
.wx2 { font-size: 14px; letter-spacing: -0.35px; width: 82px; white-space: nowrap; }
.more { margin-left: 24px; } .globe { margin-left: 9px; } .cam { margin-left: 10px; } .vol { margin-left: 10px; }
.clock { width: 56px; margin-left: 8px; display: flex; flex-direction: column; text-align: center; line-height: 18px; font-size: 12px; }
.notif { margin-left: 15px; }
.peek { width: 1px; height: 40px; background: #777; margin: 0 4px 0 19px; }
.search span { letter-spacing: -0.2px; }
```
FILE: script.js
```js
const headers = ["names", "math", "eng", "sci", "s study", "total", "min", "max", "rank"];
const table = [
  ["niagaga", 99, 70, 67, 45, 281, 45, 99, 1],
  ["nasimu", 85, 75, 50, 65, 275, 50, 85, 2],
  ["namukose", 60, 85, 77, 45, 267, 45, 85, 3],
  ["janati", 75, 50, 45, 35, 205, 35, 75, 4],
  ["zawede", 70, 40, 60, 55, 225, 40, 70, 4],
  ["namazi", 35, 54, 50, 60, 199, 35, 60, 6],
  ["naruyimba", 25, 77, 68, 75, 245, 25, 77, 4],
  ["nanteza", 90, 85, 75, 64, 314, 64, 90, 1],
  ["peruth", 60, 44, 83, 50, 237, 44, 83, 6],
  ["paul", 55, 63, 75, 47, 240, 47, 75, 6],
  ["ruth", 55, 45, 60, 38, 198, 38, 60, 11],
  ["", "", "", "", "", "", "", "", ""]
];

const div = (cls, text) => `<div class="${cls}">${text}</div>`;

// column and row headings
const letters = [..."ABCDEFGHIJKLMNOPQRSTUVWXYZ", "AA", "AB", "AC"];
document.getElementById("colheads").insertAdjacentHTML("beforeend",
  letters.map(l => div("h" + (l === "V" ? " cur" : ""), l)).join("") + div("h", ""));
document.getElementById("rowheads").innerHTML =
  Array.from({ length: 37 }, (_, i) => div("r" + (i < 2 ? " cur" : ""), i + 1)).join("");

// data cells
const fill = (r, c) => c === 0 ? "name" : r >= 10 ? "navy" : c === 8 ? "rank" : "mark";
document.getElementById("data").innerHTML =
  headers.map((h, i) => div("c left head" + (i === 8 ? " last" : ""), h)).join("") +
  table.map((row, r) => row.map((v, c) =>
    div(`c ${fill(r, c)}${c === 0 ? " left" : ""}${c === 8 ? " last" : ""}`, v)).join("")).join("");

// line chart
const X = i => 874.5 + i * 47.7;
const Y = v => 572.5 - v * 2.042;
const colors = ["#5b9bd5", "#ed7d31", "#a5a5a5", "#ffc000"];
const people = table.slice(0, 11);
let s = `<rect x="813.5" y="278.5" width="576" height="389" fill="#ffc000" stroke="#d9d9d9"/>`;
s += `<rect x="1078" y="286" width="47" height="27" fill="#c00000"/><text class="ttl" x="1101.500" y="305.500" text-anchor="middle">mark</text>`;
for (let v = 0; v <= 120; v += 20) {
  const y = Math.round(Y(v)) - 0.5;
  s += `<path d="M851 ${y}H1375" stroke="#d9d9d9"/><text class="axis" x="840" y="${y + 4}" text-anchor="end">${v}</text>`;
}
colors.forEach((col, k) => {
  s += `<polyline points="${people.map((p, i) => X(i) + "," + Y(p[k + 1])).join(" ")}" fill="none" stroke="${col}" stroke-width="3" stroke-linejoin="round"/>`;
  people.forEach((p, i) => { s += `<circle cx="${X(i)}" cy="${Y(p[k + 1])}" r="3.500" fill="${col}"/>`; });
});
colors.forEach((_, k) => people.forEach((p, i) => {
  s += `<text x="${X(i)}" y="${Y(p[k + 1]) - 12}" text-anchor="middle">${p[k + 1]}</text>`;
}));
const boxes = [[843, 37, 37], [892, 36, 36], [929, 46, 46], [993, 30, 30], [1034, 36, 37], [1083, 36, 35], [1118, 48, 48], [1176, 37, 38], [1227, 34, 34], [1283, 26, 26], [1331, 25, 26]];
s += boxes.map(b => `<rect x="${b[0]}" y="580" width="${b[1]}" height="${b[2]}" fill="red"/>`).join("");
people.forEach((p, i) => {
  const x = boxes[i][0] + boxes[i][1] - 2;
  s += `<text class="axis cat" x="${x}" y="590" text-anchor="end" transform="rotate(-45 ${x} 590)">${p[0]}</text>`;
});
[953, 1031, 1109, 1187].forEach((x, k) => {
  if (k < 3) s += `<path d="M${x + 1.5} 648H${x + 27}" stroke="${colors[k]}" stroke-width="3" stroke-linecap="round"/><circle cx="${x + 15}" cy="648" r="3.500" fill="${colors[k]}"/>`;
  s += `<text class="axis" x="${x + 30}" y="651">Series${k + 1}</text>`;
});
document.getElementById("chart").innerHTML = s;
```
